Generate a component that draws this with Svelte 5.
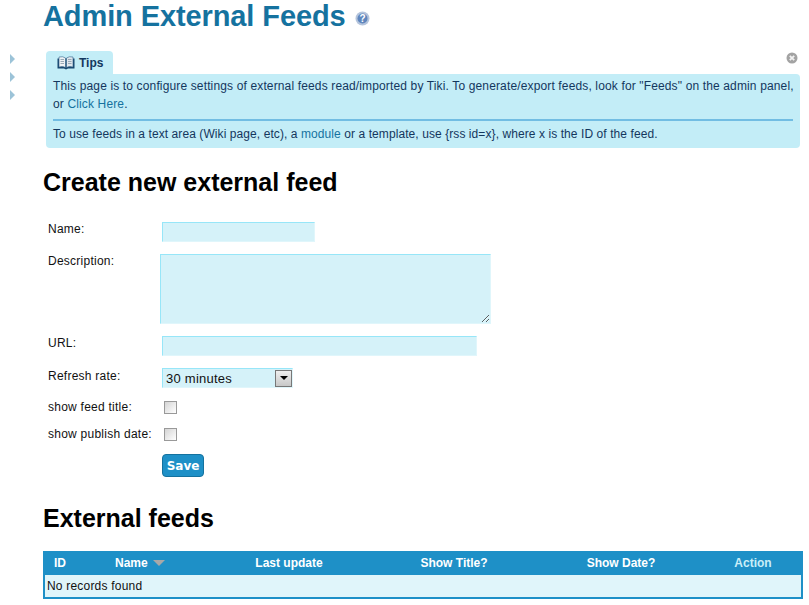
<script>
	const tocArrows = [0, 1, 2];
	const columns = [
		{ label: 'ID', cls: 'c-id' },
		{ label: 'Name', cls: 'c-name', sorted: true },
		{ label: 'Last update', cls: 'c-update' },
		{ label: 'Show Title?', cls: 'c-title' },
		{ label: 'Show Date?', cls: 'c-date' },
		{ label: 'Action', cls: 'c-action' }
	];
</script>

<div class="page">
	<aside class="side">
		{#each tocArrows as a}
			<span class="arrow"></span>
		{/each}
	</aside>

	<main class="main">
		<h1 class="title">
			Admin External Feeds
			<svg class="help" width="15" height="15" viewBox="0 0 15 15">
				<circle cx="7.5" cy="7.5" r="7" fill="#b4c4dc" />
				<circle cx="7.5" cy="7.5" r="5" fill="#5f86bd" />
				<text x="7.5" y="11" text-anchor="middle" class="help-q">?</text>
			</svg>
		</h1>

		<section class="tips">
			<div class="tab">
				<svg width="18" height="14" viewBox="0 0 18 14">
					<path d="M0.5 2.5 L0.5 12.5 L7 12.5 L9 13.5 L11 12.5 L17.5 12.5 L17.5 2.5 Z" fill="#17476f" />
					<path d="M2 1 Q6 0 8.5 2 L8.5 11.5 Q6 10 2 11 Z" fill="#eef2f5" stroke="#2f5f87" stroke-width="0.6" />
					<path d="M16 1 Q12 0 9.5 2 L9.5 11.5 Q12 10 16 11 Z" fill="#dfe7ee" stroke="#2f5f87" stroke-width="0.6" />
					<path d="M3.5 3.5h3.5M3.5 5.5h3.5M3.5 7.5h3.5M11 3.5h3.5M11 5.5h3.5M11 7.5h3.5" stroke="#9aa9b6" stroke-width="1" />
				</svg>
				<strong>Tips</strong>
			</div>
			<svg class="close" width="12" height="12" viewBox="0 0 12 12">
				<circle cx="6" cy="6" r="5.5" fill="#a3a3a3" />
				<path d="M3.8 3.8 L8.2 8.2 M8.2 3.8 L3.8 8.2" stroke="#f2f2f2" stroke-width="1.8" />
			</svg>
			<div class="tip-body">
				<p class="wide">This page is to configure settings of external feeds read/imported by Tiki. To generate/export feeds, look for "Feeds" on the admin panel, or <a href="#top">Click Here</a>.</p>
				<hr />
				<p class="narrow">To use feeds in a text area (Wiki page, etc), a <a href="#top">module</a> or a template, use &#123;rss id=x&#125;, where x is the ID of the feed.</p>
			</div>
		</section>

		<h2 class="create">Create new external feed</h2>

		<form class="form">
			<label for="f-name">Name:</label>
			<input id="f-name" class="field name-in" type="text" />

			<label for="f-desc">Description:</label>
			<textarea id="f-desc" class="field desc-in"></textarea>

			<label for="f-url">URL:</label>
			<input id="f-url" class="field url-in" type="text" />

			<label class="rate-label" for="f-rate">Refresh rate:</label>
			<div id="f-rate" class="select">
				<span>30 minutes</span>
				<span class="drop"><i></i></span>
			</div>

			<label class="check-label" for="f-title">show feed title:</label>
			<span id="f-title" class="check"></span>

			<label class="check-label" for="f-date">show publish date:</label>
			<span id="f-date" class="check"></span>

			<span></span>
			<button type="button" class="save">Save</button>
		</form>

		<h2 class="feeds">External feeds</h2>

		<div class="table">
			<div class="thead">
				{#each columns as col}
					<span class={col.cls}>
						{col.label}
						{#if col.sorted}<i class="sort"></i>{/if}
					</span>
				{/each}
			</div>
			<div class="empty">No records found</div>
		</div>
	</main>
</div>

<style>
	:global(body) {
		margin: 0;
		background: #fff;
		font-family: "Liberation Sans", Arial, sans-serif;
		overflow: hidden;
	}

	.page {
		display: flex;
		width: 809px;
		height: 605px;
		overflow: hidden;
	}

	.side {
		width: 43px;
		flex-shrink: 0;
		display: flex;
		flex-direction: column;
		gap: 8px;
		padding: 54px 0 0 10px;
		box-sizing: border-box;
	}

	.arrow {
		width: 0;
		height: 0;
		border-left: 5px solid #9cc3d8;
		border-top: 5px solid transparent;
		border-bottom: 5px solid transparent;
	}

	.main {
		width: 760px;
		flex-shrink: 0;
	}

	.title {
		margin: 0;
		height: 51px;
		font-size: 29px;
		line-height: 32px;
		font-weight: bold;
		letter-spacing: -0.1px;
		color: #15729f;
	}

	.help {
		vertical-align: 0;
		margin-left: 1px;
	}

	.help-q {
		font-size: 10px;
		font-weight: bold;
		fill: #fff;
	}

	.tips {
		position: relative;
		margin-left: 3px;
		width: 754px;
		font-size: 12px;
		color: #14375e;
	}

	.tab {
		display: flex;
		align-items: center;
		gap: 4px;
		width: 67px;
		height: 23px;
		box-sizing: border-box;
		padding: 1px 0 0 11px;
		background: #c3edf7;
		border-radius: 4px 4px 0 0;
		font-size: 12px;
	}

	.close {
		position: absolute;
		top: 1px;
		right: 2px;
	}

	.tip-body {
		background: #c3edf7;
		border-radius: 0 4px 4px 4px;
		padding: 3px 5px 4px 7px;
		height: 74px;
		box-sizing: border-box;
	}

	.tip-body p {
		margin: 0;
		line-height: 18px;
	}

	.wide {
		letter-spacing: 0.14px;
	}

	.narrow {
		letter-spacing: 0.08px;
	}

	.tip-body hr {
		border: 0;
		height: 2px;
		background: #72bde3;
		margin: 6px 2px 4px 0;
	}

	.tip-body a {
		color: #15729f;
		text-decoration: none;
	}

	.create,
	.feeds {
		margin: 0;
		font-size: 25px;
		font-weight: bold;
		color: #000;
		line-height: 28px;
	}

	.create {
		margin-top: 20px;
	}

	.feeds {
		margin-top: 27px;
	}

	.form {
		display: grid;
		grid-template-columns: 114px 1fr;
		padding: 26px 0 0 5px;
		font-size: 12px;
		letter-spacing: 0.25px;
		color: #111;
		row-gap: 12px;
		align-items: start;
	}

	.form label {
		line-height: 14px;
	}

	.rate-label {
		padding-top: 1px;
	}

	.form .check-label {
		line-height: 15px;
	}

	.field {
		display: block;
		box-sizing: border-box;
		background: #d5f2f9;
		border: 1px solid #e0f6fb;
		border-top-color: #97e6f8;
		border-left-color: #97e6f8;
		margin: 0;
		padding: 0;
		outline: none;
		height: 20px;
	}

	.name-in {
		width: 153px;
	}

	.desc-in {
		width: 331px;
		height: 70px;
		margin-left: -2px;
	}

	.url-in {
		width: 315px;
	}

	.select {
		display: flex;
		align-items: center;
		justify-content: space-between;
		box-sizing: border-box;
		width: 131px;
		height: 20px;
		padding: 1px 0 0 3px;
		background: #d5f2f9;
		border: 1px solid #e0f6fb;
		border-top-color: #97e6f8;
		border-left-color: #97e6f8;
		font-size: 13px;
		color: #111;
	}

	.drop {
		display: flex;
		align-items: center;
		justify-content: center;
		width: 17px;
		height: 17px;
		box-sizing: border-box;
		border: 1px solid #777;
		background: linear-gradient(#eee, #c8c8c8);
		margin: 0 0 1px 0;
	}

	.drop i {
		width: 0;
		height: 0;
		border-left: 4px solid transparent;
		border-right: 4px solid transparent;
		border-top: 4px solid #000;
	}

	.check {
		display: block;
		width: 13px;
		height: 13px;
		box-sizing: border-box;
		margin: 1px 0 0 2px;
		border: 1px solid #999;
		background: linear-gradient(135deg, #d4d4d4, #fff);
	}

	.save {
		width: 42px;
		height: 23px;
		padding: 0;
		background: #1e90c7;
		border: 1px solid #14729f;
		border-radius: 4px;
		color: #fff;
		font-family: "DejaVu Sans", sans-serif;
		font-size: 12px;
		font-weight: bold;
	}

	.table {
		margin-top: 19px;
		width: 760px;
		box-sizing: border-box;
		border: 2px solid #1e90c7;
		border-top: 0;
		background: #e0f5fa;
		font-size: 12px;
	}

	.thead {
		display: grid;
		grid-template-columns: 34px 126px 172px 158px 176px 88px;
		height: 24px;
		align-items: center;
		margin: 0 -2px;
		background: #1e90c7;
		color: #fff;
		font-weight: bold;
	}

	.thead span {
		text-align: center;
	}

	.c-action {
		color: #c9eef8;
	}

	.sort {
		display: inline-block;
		width: 0;
		height: 0;
		margin-left: 2px;
		vertical-align: 1px;
		border-left: 6px solid transparent;
		border-right: 6px solid transparent;
		border-top: 6px solid #a8a8a8;
	}

	.empty {
		height: 22px;
		line-height: 22px;
		padding-left: 2px;
		letter-spacing: 0.2px;
		color: #111;
	}
</style>
